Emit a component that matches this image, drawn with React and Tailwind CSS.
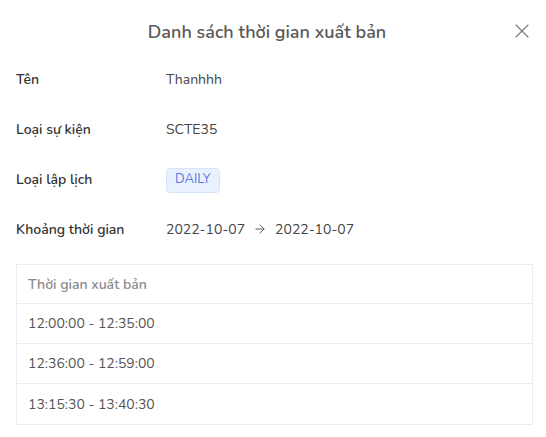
import { X, ArrowRight } from 'lucide-react'

const details = [
  { label: 'Tên', value: 'Thanhhh' },
  { label: 'Loại sự kiện', value: 'SCTE35' },
  { label: 'Loại lập lịch', tag: 'DAILY' },
  { label: 'Khoảng thời gian', range: ['2022-10-07', '2022-10-07'] },
]

const slots = ['12:00:00 - 12:35:00', '12:36:00 - 12:59:00', '13:15:30 - 13:40:30']

export default function App() {
  return (
    <div className="w-[546px] h-[437px] bg-white overflow-hidden font-['Nunito','Lato','Noto_Sans',sans-serif] text-[14px]">
      {/* Header */}
      <div className="relative h-[54px] pt-5 pr-3 flex justify-center">
        <h2 className="text-[18px] leading-[24px] font-semibold text-[#595959]">Danh sách thời gian xuất bản</h2>
        <button className="absolute right-[12px] top-[19px] text-[#777]">
          <X size={24} strokeWidth={1.1} />
        </button>
      </div>

      {/* Details */}
      <div className="px-4">
        {details.map((d) => (
          <div key={d.label} className="h-[50px] flex items-center">
            <div className="w-[150px] font-semibold text-[#333]">{d.label}</div>
            {d.value && <div className="text-[#444]">{d.value}</div>}
            {d.tag && (
              <span className="mt-[2px] h-[25px] px-[8px] flex items-center rounded-[4px] border border-[#d6e4fb] bg-[#eaf1fe] text-[#5b76e0] text-[13px]">{d.tag}</span>
            )}
            {d.range && (
              <div className="flex items-center gap-[8px] text-[#444]">
                <span>{d.range[0]}</span>
                <ArrowRight size={14} strokeWidth={1.6} className="text-[#555]" />
                <span>{d.range[1]}</span>
              </div>
            )}
          </div>
        ))}
      </div>

      {/* Table */}
      <div className="mt-[10px] ml-4 mr-[13px] border border-[#eaecf3]">
        <div className="h-[39px] px-[11px] flex items-center font-semibold text-[#8a8a8a] border-b border-[#eaecf3]">Thời gian xuất bản</div>
        {slots.map((s, i) => (
          <div key={s} className={`h-[40px] px-[11px] flex items-center text-[#555] ${i < slots.length - 1 ? 'border-b border-[#eaecf3]' : ''}`}>{s}</div>
        ))}
      </div>
    </div>
  )
}
